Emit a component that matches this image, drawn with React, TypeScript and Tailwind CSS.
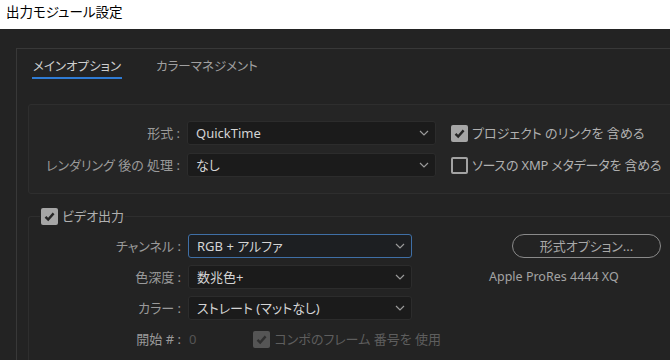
import React from 'react';

const Chevron = () => (
  <svg width="10" height="6" viewBox="0 0 10 6" className="shrink-0">
    <polyline points="1,1 5,5 9,1" fill="none" stroke="#9a9a9a" strokeWidth="1.2" />
  </svg>
);

interface CheckProps {
  checked?: boolean;
  disabled?: boolean;
}

const Check = ({ checked, disabled }: CheckProps) => {
  if (!checked) {
    return <span className="w-[17px] h-[17px] shrink-0 rounded-[2px] border-2 border-[#a3a3a3]" />;
  }
  return (
    <span className={`w-[17px] h-[17px] shrink-0 rounded-[2px] flex items-center justify-center ${disabled ? 'bg-[#555555]' : 'bg-[#a6a6a6]'}`}>
      <svg width="13" height="13" viewBox="0 0 13 13">
        <path d="M2.5 6.8 L5.2 9.5 L10.6 3.4" fill="none" stroke={disabled ? '#2f2f2f' : '#262626'} strokeWidth="2.4" />
      </svg>
    </span>
  );
};

interface SelectProps {
  value: string;
  width: string;
  active?: boolean;
}

const Select = ({ value, width, active }: SelectProps) => (
  <div className={`${width} h-[24px] shrink-0 rounded-[3px] border flex items-center justify-between pl-[8px] pr-[6px] text-[#d4d4d4] ${active ? 'border-[#3f6fa6] bg-[#1d1f22]' : 'border-[#2c2c2c] bg-[#1b1b1b]'}`}>
    <span>{value}</span>
    <Chevron />
  </div>
);

const Label = ({ text, width }: { text: string; width: string }) => (
  <div className={`${width} shrink-0 text-right text-[#9a9a9a] pr-[7px]`}>{text}</div>
);

export default function App() {
  return (
    <div className="w-[670px] h-[360px] overflow-hidden flex flex-col bg-[#232323] text-[13px] leading-[20px] font-['Noto_Sans','Noto_Sans_CJK_JP',sans-serif] [font-feature-settings:'palt']">
      <div className="h-[29px] shrink-0 bg-white pl-[6px] pt-[2px] text-[13.5px] text-black">出力モジュール設定</div>

      <div className="flex-1 pt-[19px] pl-[16px]">
        <div className="w-[700px] h-full border-l border-t border-[#383838] pl-[11px]">
          {/* tabs */}
          <div className="flex pt-[8px] pl-[4px]">
            <div className="px-[1px] border-b-2 border-[#2f7bd4] text-[#cfcfcf] text-[12.5px]">メインオプション</div>
            <div className="ml-[33px] px-[1px] text-[#a0a0a0] text-[12.5px]">カラーマネジメント</div>
          </div>

          {/* format box */}
          <div className="mt-[25px] w-[680px] h-[90px] rounded-[3px] border border-[#2e2e2e] bg-[#252525] pt-[16px] flex flex-col gap-[8px]">
            <div className="flex items-center">
              <Label text="形式 :" width="w-[158px]" />
              <Select value="QuickTime" width="w-[249px]" />
              <div className="ml-[15px] flex items-center gap-[4px] text-[#b0b0b0]">
                <Check checked />
                <span>プロジェクト のリンクを 含める</span>
              </div>
            </div>
            <div className="flex items-center">
              <Label text="レンダリング 後の 処理 :" width="w-[158px]" />
              <Select value="なし" width="w-[249px]" />
              <div className="ml-[15px] flex items-center gap-[4px] text-[#b0b0b0]">
                <Check />
                <span className="tracking-[-0.2px]">ソースの XMP メタデータを 含める</span>
              </div>
            </div>
          </div>

          {/* video output */}
          <fieldset className="mt-[12px] w-[680px] border-l border-t border-[#2e2e2e] rounded-tl-[3px] h-[200px]">
            <legend className="ml-[11px] px-[1px] flex items-center gap-[4px] text-[#b0b0b0]">
              <Check checked />
              <span>ビデオ出力</span>
            </legend>
            <div className="pt-[8px] flex flex-col gap-[7px]">
              <div className="flex items-center">
                <Label text="チャンネル :" width="w-[159px]" />
                <Select value="RGB + アルファ" width="w-[224px]" active />
                <button className="ml-[100px] w-[149px] h-[24px] rounded-full border-[1.5px] border-[#8a8a8a] text-[#a8a8a8] flex items-center justify-center">
                  形式オプション...
                </button>
              </div>
              <div className="flex items-center">
                <Label text="色深度 :" width="w-[159px]" />
                <Select value="数兆色+" width="w-[224px]" />
                <span className="ml-[77px] text-[12.5px] text-[#a3a3a3]">Apple ProRes 4444 XQ</span>
              </div>
              <div className="flex items-center">
                <Label text="カラー :" width="w-[159px]" />
                <Select value="ストレート (マットなし)" width="w-[224px]" />
              </div>
              <div className="flex items-center h-[24px]">
                <Label text="開始 # :" width="w-[159px]" />
                <span className="ml-[1px] text-[#555555]">0</span>
                <div className="ml-[57px] flex items-center gap-[4px] text-[#5e5e5e]">
                  <Check checked disabled />
                  <span>コンポのフレーム 番号を 使用</span>
                </div>
              </div>
            </div>
          </fieldset>
        </div>
      </div>
    </div>
  );
}
